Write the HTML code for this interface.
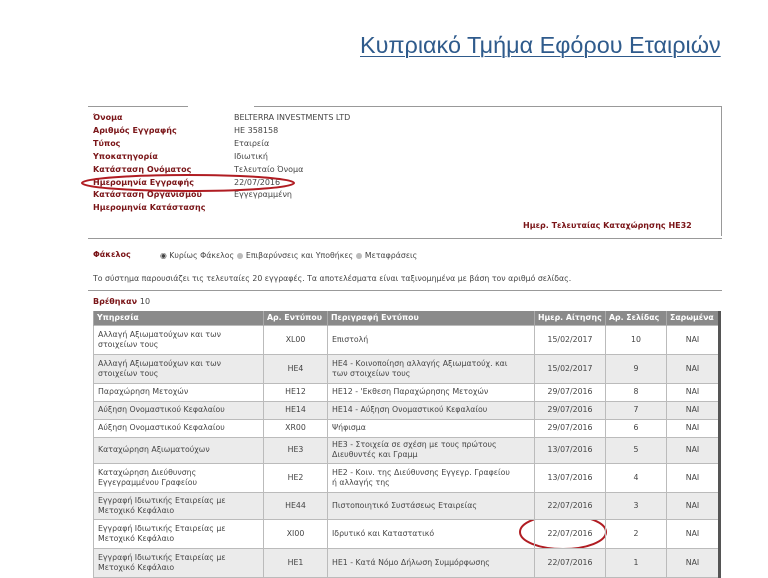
<!DOCTYPE html>
<html><head><meta charset="utf-8"><style>
*{margin:0;padding:0;box-sizing:border-box}
body{width:768px;height:576px;background:#fff;position:relative;overflow:hidden;font-family:"DejaVu Sans","Liberation Sans",sans-serif;}
.a{position:absolute;white-space:nowrap}
.title{left:360px;top:32px;font-family:"Liberation Sans",sans-serif;font-size:23.4px;color:#2f5b8c;text-decoration:underline;text-decoration-thickness:1px;text-underline-offset:3px}
.lb{font-size:8px;color:#7a1518;font-weight:bold;left:93px}
.vl{font-size:8px;color:#444;left:234px}
.hr{position:absolute;height:1px;background:#999}
table{position:absolute;left:93px;top:311px;width:628px;border-collapse:collapse;font-size:7.8px;color:#444;border-right:3px solid #555}
th{background:#8a8a8a;color:#fff;font-weight:bold;text-align:left;height:14px;padding:0 3px;font-size:7.8px;border-left:1px solid #aaa}
td{border:1px solid #bbb;padding:0 4px;line-height:10px;vertical-align:middle;white-space:nowrap}
tr.g td{background:#ebebeb}
td.c{text-align:center}
</style></head><body>
<div class="a title">Κυπριακό Τμήμα Εφόρου Εταιριών</div>
<div class="hr" style="left:88px;top:106px;width:100px"></div>
<div class="hr" style="left:254px;top:106px;width:468px"></div>
<div class="hr" style="left:721px;top:106px;width:1px;height:130px"></div>
<div class="a lb" style="top:113px">Όνομα</div><div class="a vl" style="top:113px">BELTERRA INVESTMENTS LTD</div>
<div class="a lb" style="top:126px">Αριθμός Εγγραφής</div><div class="a vl" style="top:126px">HE 358158</div>
<div class="a lb" style="top:139px">Τύπος</div><div class="a vl" style="top:139px">Εταιρεία</div>
<div class="a lb" style="top:152px">Υποκατηγορία</div><div class="a vl" style="top:152px">Ιδιωτική</div>
<div class="a lb" style="top:165px">Κατάσταση Ονόματος</div><div class="a vl" style="top:165px">Τελευταίο Όνομα</div>
<div class="a lb" style="top:178px">Ημερομηνία Εγγραφής</div><div class="a vl" style="top:178px">22/07/2016</div>
<div class="a lb" style="top:190px">Κατάσταση Οργανισμού</div><div class="a vl" style="top:190px">Εγγεγραμμένη</div>
<div class="a lb" style="top:203px">Ημερομηνία Κατάστασης</div>
<div class="a lb" style="left:523px;top:221px">Ημερ. Τελευταίας Καταχώρησης HE32</div>
<div class="hr" style="left:88px;top:238px;width:634px"></div>
<div class="a lb" style="top:250px">Φάκελος</div>
<div class="a vl" style="left:160px;top:251px;font-size:7.8px">◉ Κυρίως Φάκελος <span style="color:#bbb">●</span> Επιβαρύνσεις και Υποθήκες <span style="color:#bbb">●</span> Μεταφράσεις</div>
<div class="a vl" style="left:93px;top:274px;font-size:7.8px">Το σύστημα παρουσιάζει τις τελευταίες 20 εγγραφές. Τα αποτελέσματα είναι ταξινομημένα με βάση τον αριθμό σελίδας.</div>
<div class="hr" style="left:88px;top:290px;width:634px"></div>
<div class="a lb" style="top:297px">Βρέθηκαν <span style="color:#444;font-weight:normal">10</span></div>
<svg class="a" style="left:0;top:0" width="768" height="576">
<ellipse cx="188" cy="183" rx="106" ry="8" fill="none" stroke="#b01c22" stroke-width="2"/>
<ellipse cx="563" cy="532" rx="43" ry="17" fill="none" stroke="#b01c22" stroke-width="2"/>
</svg>
<table>
<tr><th style="width:170px">Υπηρεσία</th><th style="width:64px">Αρ. Εντύπου</th><th style="width:207px">Περιγραφή Εντύπου</th><th style="width:71px">Ημερ. Αίτησης</th><th style="width:61px">Αρ. Σελίδας</th><th>Σαρωμένα</th></tr>
<tr style="height:29px"><td>Αλλαγή Αξιωματούχων και των<br>στοιχείων τους</td><td class="c">XL00</td><td>Επιστολή</td><td class="c">15/02/2017</td><td class="c">10</td><td class="c">NAI</td></tr>
<tr class="g" style="height:29px"><td>Αλλαγή Αξιωματούχων και των<br>στοιχείων τους</td><td class="c">HE4</td><td>HE4 - Κοινοποίηση αλλαγής Αξιωματούχ. και<br>των στοιχείων τους</td><td class="c">15/02/2017</td><td class="c">9</td><td class="c">NAI</td></tr>
<tr style="height:18px"><td>Παραχώρηση Μετοχών</td><td class="c">HE12</td><td>HE12 - 'Εκθεση Παραχώρησης Μετοχών</td><td class="c">29/07/2016</td><td class="c">8</td><td class="c">NAI</td></tr>
<tr class="g" style="height:18px"><td>Αύξηση Ονομαστικού Κεφαλαίου</td><td class="c">HE14</td><td>HE14 - Αύξηση Ονομαστικού Κεφαλαίου</td><td class="c">29/07/2016</td><td class="c">7</td><td class="c">NAI</td></tr>
<tr style="height:18px"><td>Αύξηση Ονομαστικού Κεφαλαίου</td><td class="c">XR00</td><td>Ψήφισμα</td><td class="c">29/07/2016</td><td class="c">6</td><td class="c">NAI</td></tr>
<tr class="g" style="height:26px"><td>Καταχώρηση Αξιωματούχων</td><td class="c">HE3</td><td>HE3 - Στοιχεία σε σχέση με τους πρώτους<br>Διευθυντές και Γραμμ</td><td class="c">13/07/2016</td><td class="c">5</td><td class="c">NAI</td></tr>
<tr style="height:29px"><td>Καταχώρηση Διεύθυνσης<br>Εγγεγραμμένου Γραφείου</td><td class="c">HE2</td><td>HE2 - Κοιν. της Διεύθυνσης Εγγεγρ. Γραφείου<br>ή αλλαγής της</td><td class="c">13/07/2016</td><td class="c">4</td><td class="c">NAI</td></tr>
<tr class="g" style="height:27px"><td>Εγγραφή Ιδιωτικής Εταιρείας με<br>Μετοχικό Κεφάλαιο</td><td class="c">HE44</td><td>Πιστοποιητικό Συστάσεως Εταιρείας</td><td class="c">22/07/2016</td><td class="c">3</td><td class="c">NAI</td></tr>
<tr style="height:29px"><td>Εγγραφή Ιδιωτικής Εταιρείας με<br>Μετοχικό Κεφάλαιο</td><td class="c">XI00</td><td>Ιδρυτικό και Καταστατικό</td><td class="c">22/07/2016</td><td class="c">2</td><td class="c">NAI</td></tr>
<tr class="g" style="height:29px"><td>Εγγραφή Ιδιωτικής Εταιρείας με<br>Μετοχικό Κεφάλαιο</td><td class="c">HE1</td><td>HE1 - Κατά Νόμο Δήλωση Συμμόρφωσης</td><td class="c">22/07/2016</td><td class="c">1</td><td class="c">NAI</td></tr>
</table>
</body></html>
